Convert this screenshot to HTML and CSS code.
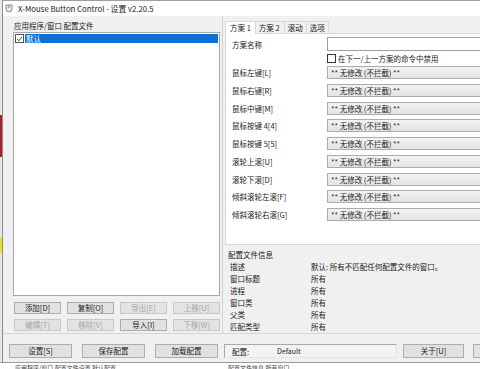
FILE: index.html
```html
<!DOCTYPE html>
<html lang="zh-CN">
<head>
<meta charset="UTF-8">
<meta name="viewport" content="width=device-width, initial-scale=1.0">
<title>X-Mouse Button Control - 设置 v2.20.5</title>
<link rel="stylesheet" href="styles.css">
</head>
<body>
<div class="screen">
  <div class="top-row">
    <!-- sliver of the window behind -->
    <div class="behind-left">
      <div class="bl-gap1"></div>
      <div class="bl-red"></div>
      <div class="bl-gap2"></div>
      <div class="bl-yellow"></div>
    </div>

    <div class="window">
      <div class="titlebar">
        <svg class="app-icon" width="8" height="9" viewBox="0 0 8 9">
          <path d="M1 1 H7 V5 Q7 8 4 8 Q1 8 1 5 Z" fill="#e6e6e6" stroke="#8a8a8a" stroke-width="1"/>
          <line x1="4" y1="1" x2="4" y2="4" stroke="#8a8a8a" stroke-width="1"/>
        </svg>
        <span>X-Mouse Button Control - 设置 v2.20.5</span>
      </div>

      <div class="client">
        <div class="main">
          <div class="left-pane">
            <div class="caption">应用程序/窗口 配置文件</div>
            <div class="list">
              <div class="list-item">
                <span class="check">
                  <svg width="8" height="8" viewBox="0 0 8 8"><path d="M1.5 4 L3.3 6 L6.8 1.6" fill="none" stroke="#333" stroke-width="1"/></svg>
                </span>
                <span class="sel">默认</span>
              </div>
            </div>
            <div class="btn-grid">
              <button class="btn">添加[D]</button>
              <button class="btn">复制[O]</button>
              <button class="btn" disabled>导出[E]</button>
              <button class="btn" disabled>上移[U]</button>
              <button class="btn" disabled>编辑[T]</button>
              <button class="btn" disabled>移除[V]</button>
              <button class="btn">导入[I]</button>
              <button class="btn" disabled>下移[W]</button>
            </div>
          </div>

          <div class="right-pane">
            <div class="tabs">
              <div class="tab active">方案 1</div>
              <div class="tab">方案 2</div>
              <div class="tab">滚动</div>
              <div class="tab">选项</div>
            </div>
            <div class="tab-body">
              <div class="name-row">
                <span class="lbl">方案名称</span>
                <span class="edit"></span>
              </div>
              <div class="check-row">
                <span class="check"></span>
                <span>在下一/上一方案的命令中禁用</span>
              </div>
              <div class="map-grid">
                <span class="lbl">鼠标左键[L]</span><span class="combo">** 无修改 (不拦截) **</span>
                <span class="lbl">鼠标右键[R]</span><span class="combo">** 无修改 (不拦截) **</span>
                <span class="lbl">鼠标中键[M]</span><span class="combo">** 无修改 (不拦截) **</span>
                <span class="lbl">鼠标按键 4[4]</span><span class="combo">** 无修改 (不拦截) **</span>
                <span class="lbl">鼠标按键 5[5]</span><span class="combo">** 无修改 (不拦截) **</span>
                <span class="lbl">滚轮上滚[U]</span><span class="combo">** 无修改 (不拦截) **</span>
                <span class="lbl">滚轮下滚[D]</span><span class="combo">** 无修改 (不拦截) **</span>
                <span class="lbl">倾斜滚轮左滚[F]</span><span class="combo">** 无修改 (不拦截) **</span>
                <span class="lbl">倾斜滚轮右滚[G]</span><span class="combo">** 无修改 (不拦截) **</span>
              </div>
            </div>

            <div class="info">
              <div class="info-head">配置文件信息</div>
              <div class="info-grid">
                <span>描述</span><span>默认: 所有不匹配任何配置文件的窗口。</span>
                <span>窗口标题</span><span>所有</span>
                <span>进程</span><span>所有</span>
                <span>窗口类</span><span>所有</span>
                <span>父类</span><span>所有</span>
                <span>匹配类型</span><span>所有</span>
              </div>
            </div>
          </div>
        </div>

        <div class="bottom-bar">
          <button class="btn wide">设置[S]</button>
          <button class="btn wide">保存配置</button>
          <button class="btn wide">加载配置</button>
          <div class="profile-field">
            <span class="pf-label">配置:</span>
            <span>Default</span>
          </div>
          <button class="btn about">关于[U]</button>
          <button class="btn close" aria-label="关闭"></button>
        </div>
      </div>
    </div>
  </div>

  <!-- top edge of the window behind -->
  <div class="behind-bottom">
    <span class="bb-a">应用程序/窗口 配置文件设置 默认配置</span>
    <span class="bb-b">配置文件信息 所有窗口</span>
  </div>
</div>
</body>
</html>
```

FILE: styles.css
```css
html, body { margin: 0; padding: 0; }
body {
  width: 480px;
  height: 369px;
  overflow: hidden;
  background: #fff;
  font-family: "Noto Sans CJK SC", "Noto Sans", sans-serif;
  font-size: 7.5px;
  color: #1a1a1a;
}

.screen { display: flex; flex-direction: column; width: 480px; height: 369px; }
.top-row { display: flex; height: 362px; overflow: hidden; }

/* window behind, only a sliver shows */
.behind-left { width: 2px; flex: none; display: flex; flex-direction: column; background: #e9e9e9; }
.bl-gap1 { height: 115px; }
.bl-red { height: 42px; background: #a5242a; }
.bl-gap2 { height: 80px; }
.bl-yellow { height: 16px; background: #e4e23a; }

.behind-bottom {
  height: 7px;
  display: flex;
  overflow: hidden;
  background: #fff;
  color: #444;
  border-top: 1px solid #9a9a9a;
  box-sizing: border-box;
  padding: 1px 0 0 15px;
  line-height: 8px;
  font-size: 6px;
}
.bb-b { margin-left: 112px; }

/* dialog */
.window {
  width: 560px;
  flex: none;
  display: flex;
  flex-direction: column;
  border-left: 1px solid #8c8c8c;
  border-top: 1px solid #a0a0a0;
  background: #f0f0f0;
}

.titlebar {
  height: 15px;
  display: flex;
  align-items: center;
  gap: 5px;
  padding-left: 2px;
  background: #fff;
  font-size: 7.8px;
  color: #222;
}
.app-icon { flex: none; }

.client { flex: 1; display: flex; flex-direction: column; }

.main { display: flex; height: 317px; border-bottom: 1px solid #d6d6d6; }

/* left: profile list */
.left-pane {
  width: 209px;
  flex: none;
  padding: 4px 0 0 10px;
  border-right: 1px solid #d4d4d4;
  display: flex;
  flex-direction: column;
}
.caption { line-height: 12px; padding-left: 1px; }
.list {
  width: 205px;
  height: 262px;
  background: #fff;
  border: 1px solid #a8a8a8;
}
.list-item { display: flex; align-items: center; height: 9px; margin-top: 1px; padding-left: 1px; }
.check {
  width: 7px;
  height: 7px;
  border: 1px solid #555;
  background: #fff;
  display: flex;
  align-items: center;
  justify-content: center;
  flex: none;
}
.check svg { display: block; }
.sel {
  flex: 1;
  margin: 0 1px 0 1px;
  height: 9px;
  line-height: 9px;
  background: #0b6fd4;
  color: #fff;
  padding-left: 1px;
}

.btn-grid {
  margin: 6px 0 0 1px;
  width: 206px;
  display: grid;
  grid-template-columns: repeat(4, 1fr);
  grid-auto-rows: 12px;
  column-gap: 6px;
  row-gap: 5px;
}

.btn {
  font-family: inherit;
  font-size: 7.5px;
  color: #1a1a1a;
  background: #e1e1e1;
  border: 1px solid #adadad;
  padding: 0;
  margin: 0;
  line-height: 10px;
}
.btn:disabled { background: #e3e3e3; border-color: #c8c8c8; color: #a6a6a6; }

/* right: tab control */
.right-pane { flex: 1; padding: 4px 0 0 2px; display: flex; flex-direction: column; }
.tabs { display: flex; height: 13px; align-items: flex-end; }
.tab {
  height: 12px;
  line-height: 12px;
  padding: 0 3px;
  border: 1px solid #d9d9d9;
  border-bottom: none;
  margin-right: -1px;
  background: #f0f0f0;
  box-sizing: border-box;
}
.tab:nth-child(2) { padding: 0 4px 0 3px; }
.tab.active { height: 13px; background: #fff; padding: 0 4px; position: relative; top: 1px; }

.tab-body {
  height: 210px;
  background: #fff;
  border: 1px solid #d9d9d9;
  padding: 3px 0 0 6px;
}
.name-row { display: flex; align-items: center; height: 14px; }
.lbl { width: 95px; flex: none; }
.edit { flex: 1; height: 14px; box-sizing: border-box; border: 1px solid #9f9f9f; background: #fff; }
.check-row { display: flex; align-items: center; gap: 2px; height: 9px; margin: 3px 0 0 95px; }
.check-row .check { width: 7px; height: 7px; border-color: #333; }

.map-grid {
  margin-top: 3px;
  display: grid;
  grid-template-columns: 95px 1fr;
  grid-auto-rows: 13px;
  row-gap: 4.75px;
  align-items: center;
}
.combo {
  height: 13px;
  box-sizing: border-box;
  border: 1px solid #acacac;
  background: linear-gradient(#f3f3f3, #e3e3e3);
  line-height: 11px;
  padding-left: 3px;
}

.info { padding: 4px 0 0 3px; }
.info-head { line-height: 12px; }
.info-grid {
  display: grid;
  grid-template-columns: 81px 1fr;
  grid-auto-rows: 12px;
  line-height: 12px;
  padding-left: 2px;
}

/* bottom buttons */
.bottom-bar { display: flex; align-items: flex-start; padding: 10px 0 0 6px; height: 17px; }
.bottom-bar > * { flex: none; }
.bottom-bar .btn { height: 14px; }
.btn.wide { width: 63px; margin-right: 10px; }
.btn.wide:nth-child(3) { margin-right: 6px; }
.profile-field {
  width: 173px;
  height: 14px;
  box-sizing: border-box;
  border: 1px solid #a9a9a9;
  border-right-color: #e6e6e6;
  border-bottom-color: #e6e6e6;
  background: #f3f3f3;
  display: flex;
  align-items: center;
  padding-left: 7px;
  font-size: 7px;
}
.pf-label { width: 45px; font-size: 7.5px; }
.btn.about { width: 61px; margin-left: 6px; }
.btn.close { width: 61px; margin-left: 9px; }
```
